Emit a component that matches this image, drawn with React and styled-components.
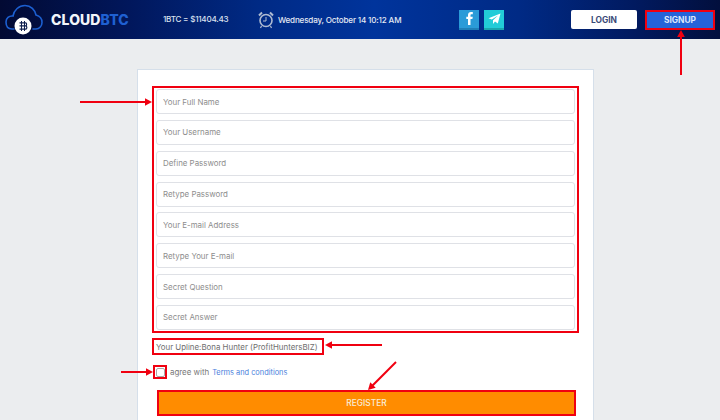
import React from 'react';
import styled, { createGlobalStyle } from 'styled-components';

const Global = createGlobalStyle`
    html, body {
        margin:0;
        padding:0;
        background:#ebedef;
        font-family:"Inter","Liberation Sans",sans-serif;
    }
    body {
        width:720px;
        height:420px;
        overflow:hidden;
        position:relative;
    }
`;

const Header = styled.header`
    height:39px;
    box-sizing:border-box;
    display:flex;
    align-items:center;
    padding:0 5px 0 5px;
    background:linear-gradient(90deg,#020a33 0%,#01175c 18%,#002a85 36%,#00349c 52%,#002a85 72%,#011a60 88%,#020f3d 100%);
`;

const Logo = styled.div`
    display:flex;
    align-items:center;
    width:158px;
    gap:8px;
    font-weight:800;
    font-size:14px;
    letter-spacing:0.1px;
    color:#f2f5fa;
    span { color:#1f60d2; }
`;

const Price = styled.div`
    width:95px;
    padding-bottom:1px;
    font-size:8.1px;
    font-weight:500;
    letter-spacing:-0.25px;
    color:#dbe2ef;
`;

const DateBox = styled.div`
    width:201px;
    display:flex;
    align-items:center;
    gap:4px;
    font-size:8.1px;
    font-weight:500;
    letter-spacing:-0.18px;
    color:#e4e9f3;
`;

const Social = styled.a`
    width:20px;
    height:20px;
    box-sizing:border-box;
    margin-right:5px;
    display:flex;
    align-items:center;
    justify-content:center;
    background:${p => p.$bg};
    border-bottom:2px solid ${p => p.$edge};
`;

const Spacer = styled.div`
    flex:1;
`;

const HeadButton = styled.div`
    height:${p => p.$h}px;
    width:${p => p.$w}px;
    box-sizing:border-box;
    display:flex;
    align-items:center;
    justify-content:center;
    margin-left:${p => p.$ml || 0}px;
    border-radius:${p => p.$red ? 0 : 2}px;
    background:${p => p.$bg};
    color:${p => p.$color};
    border:${p => p.$red ? '2px solid #f00010' : 'none'};
    font-size:8.4px;
    font-weight:700;
`;

const Main = styled.main`
    padding:30px 0 0 137px;
`;

const Card = styled.section`
    width:457px;
    height:360px;
    box-sizing:border-box;
    padding:16px 14px 0 14px;
    background:#fff;
    border:1px solid #d5dfea;
`;

const Highlight = styled.div`
    border:2px solid #f00010;
    box-sizing:border-box;
`;

const Fields = styled(Highlight)`
    width:427px;
    height:247px;
    padding:1px 2px;
    display:flex;
    flex-direction:column;
    justify-content:space-between;
`;

const Input = styled.input`
    display:block;
    width:419px;
    height:25px;
    box-sizing:border-box;
    padding:0 6px;
    border:1px solid #dfe1e6;
    border-radius:3px;
    background:#fff;
    font-family:"Inter","Liberation Sans",sans-serif;
    font-size:7.9px;
    outline:none;
    &::placeholder { color:#8d8d8d; opacity:1; }
`;

const Upline = styled(Highlight)`
    width:172px;
    height:17px;
    margin-top:5px;
    padding-left:2px;
    display:flex;
    align-items:center;
    font-size:7.9px;
    color:#6e6e6e;
    white-space:nowrap;
`;

const AgreeRow = styled.div`
    display:flex;
    align-items:center;
    margin-top:10px;
    margin-left:1px;
    height:14px;
    font-size:7.9px;
    color:#777;
`;

const CheckFrame = styled(Highlight)`
    width:14px;
    height:14px;
    margin-right:3px;
    display:flex;
    align-items:center;
    justify-content:center;
`;

const CheckBox = styled.div`
    width:9px;
    height:9px;
    box-sizing:border-box;
    border:1px solid #a9a9a9;
    border-radius:2px;
`;

const Terms = styled.a`
    color:#4a80dc;
    margin-left:3px;
    font-size:7.4px;
`;

const Register = styled.button`
    display:block;
    width:419px;
    height:26px;
    margin:11px 0 0 5px;
    box-sizing:border-box;
    border:2px solid #f00010;
    background:#ff8c00;
    color:#f8ecd8;
    font-family:"Inter","Liberation Sans",sans-serif;
    font-size:8.4px;
    font-weight:500;
    padding:0;
`;

const Arrows = styled.svg`
    position:absolute;
    left:0;
    top:0;
    pointer-events:none;
`;

const placeholders = [
    'Your Full Name', 'Your Username', 'Define Password', 'Retype Password',
    'Your E-mail Address', 'Retype Your E-mail', 'Secret Question', 'Secret Answer',
];

const CloudLogo = () => (
    <svg width="38" height="31" viewBox="0 0 38 31" fill="none">
        <path d="M9 25 H7 C3 25 1 22 1 18 C1 14 4 11.500 8 12 C9 6 14 1.500 20 1.500 C26 1.500 30 6 31 11 C35 12 37 15 37 18.500 C37 22 34.500 25 31 25 H28"
            stroke="#1c5fd0" strokeWidth="1.600" strokeLinecap="round" />
        <circle cx="18" cy="22" r="8.500" fill="#fff" />
        <path d="M16.500 17 V27 M19.500 17 V27" stroke="#10204f" strokeWidth="1" />
        <path d="M14.500 18.800 H20.500 C22 18.800 22 21.800 20.500 21.800 H14.500 M20.500 21.800 C22.300 21.800 22.300 25.200 20.500 25.200 H14.500"
            stroke="#10204f" strokeWidth="1.200" />
    </svg>
);

const Clock = () => (
    <svg width="16" height="18" viewBox="0 0 16 18" fill="none" stroke="#aebbd2">
        <circle cx="8" cy="9.500" r="6" strokeWidth="1.600" />
        <path d="M8 6 V10 H5" strokeWidth="1" />
        <path d="M1 4.500 L4 1.500 M15 4.500 L12 1.500" strokeWidth="2" />
        <path d="M3.500 15 L2.500 17 M12.500 15 L13.500 17" strokeWidth="1.200" />
    </svg>
);

const Telegram = () => (
    <svg width="13" height="12" viewBox="0 0 13 12">
        <path d="M12.500 .5 L.5 5.200 L3.800 6.500 L10 2.500 L5 7.300 L5 11 L7 8.500 L9.800 10.500 Z" fill="#fff" />
    </svg>
);

const Facebook = () => (
    <svg width="7" height="13" viewBox="0 0 7 13">
        <path d="M2 13 V7 H.3 V4.800 H2 V3 C2 1 3.200 0 5 0 H6.800 V2.200 H5.600 C4.800 2.200 4.500 2.600 4.500 3.200 V4.800 H6.800 L6.400 7 H4.500 V13 Z" fill="#fff" />
    </svg>
);

const ArrowLine = ({ x1, y1, x2, y2 }) => {
    const a = Math.atan2(y2 - y1, x2 - x1);
    const head = (o, l) => `${x2 - l * Math.cos(a + o)},${y2 - l * Math.sin(a + o)}`;
    return (
        <g>
            <line x1={x1} y1={y1} x2={x2 - 5 * Math.cos(a)} y2={y2 - 5 * Math.sin(a)} stroke="#f00010" strokeWidth="2" />
            <polygon points={`${x2},${y2} ${head(0.5, 8)} ${head(-0.5, 8)}`} fill="#f00010" />
        </g>
    );
};

export default function App() {
    return (
        <>
            <Global />
            <Header>
                <Logo>
                    <CloudLogo />
                    <div>CLOUD<span>BTC</span></div>
                </Logo>
                <Price>1BTC = $11404.43</Price>
                <DateBox>
                    <Clock />
                    Wednesday, October 14 10:12 AM
                </DateBox>
                <Social $bg="#2a9bd8" $edge="#1f7fb8"><Facebook /></Social>
                <Social $bg="#22ccd8" $edge="#1aa5ae"><Telegram /></Social>
                <Spacer />
                <HeadButton $w={66} $h={19} $bg="#fff" $color="#3a4a78">LOGIN</HeadButton>
                <HeadButton $w={70} $h={20} $ml={8} $red $bg="#2563d8" $color="#dfe8fa">SIGNUP</HeadButton>
            </Header>
            <Main>
                <Card>
                    <Fields>
                        {placeholders.map(p => <Input key={p} placeholder={p} />)}
                    </Fields>
                    <Upline>Your Upline:Bona Hunter (ProfitHuntersBIZ)</Upline>
                    <AgreeRow>
                        <CheckFrame><CheckBox /></CheckFrame>
                        agree with <Terms>Terms and conditions</Terms>
                    </AgreeRow>
                    <Register>REGISTER</Register>
                </Card>
            </Main>
            <Arrows width="720" height="420">
                <ArrowLine x1={681} y1={75} x2={681} y2={30} />
                <ArrowLine x1={80} y1={102} x2={152} y2={102} />
                <ArrowLine x1={382} y1={345} x2={325} y2={345} />
                <ArrowLine x1={121} y1={372} x2={153} y2={372} />
                <ArrowLine x1={396} y1={362} x2={368} y2={390} />
            </Arrows>
        </>
    );
}
